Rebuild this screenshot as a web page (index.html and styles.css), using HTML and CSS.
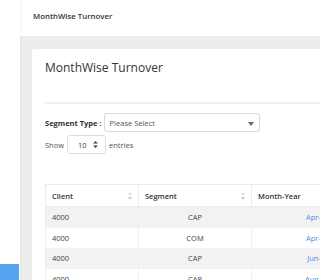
FILE: index.html
```html
<!DOCTYPE html>
<html lang="en">
<head>
    <meta charset="UTF-8">
    <meta name="viewport" content="width=device-width, initial-scale=1.0">
    <title>MonthWise Turnover</title>
    <link rel="stylesheet" href="styles.css">
</head>
<body>
    <div class="layout">
        <aside class="sidebar">
            <div class="sidebar-active"></div>
        </aside>

        <div class="main">
            <header class="topbar">MonthWise Turnover</header>

            <div class="content">
                <div class="card">
                    <h2 class="card-title">MonthWise Turnover</h2>
                    <hr class="divider">

                    <div class="filter-row">
                        <label class="filter-label">Segment Type :</label>
                        <div class="select">
                            <span>Please Select</span>
                            <span class="caret"></span>
                        </div>
                    </div>

                    <div class="length-row">
                        <span>Show</span>
                        <div class="number-box">
                            <span>10</span>
                            <svg class="spin" width="5" height="7" viewBox="0 0 5 7">
                                <path d="M2.5 0 L5 2.5 L0 2.5 Z M0 4.5 L5 4.5 L2.5 7 Z" fill="#444"/>
                            </svg>
                        </div>
                        <span>entries</span>
                    </div>

                    <table class="data-table">
                        <thead>
                            <tr>
                                <th class="col-client">Client <span class="sort"></span></th>
                                <th class="col-seg">Segment <span class="sort"></span></th>
                                <th class="col-month">Month-Year</th>
                            </tr>
                        </thead>
                        <tbody>
                            <tr><td>4000</td><td class="center">CAP</td><td class="month">Apr-2021</td></tr>
                            <tr><td>4000</td><td class="center">COM</td><td class="month">Apr-2021</td></tr>
                            <tr><td>4000</td><td class="center">CAP</td><td class="month">Jun-2021</td></tr>
                            <tr><td>4000</td><td class="center">CAP</td><td class="month">Aug-2021</td></tr>
                        </tbody>
                    </table>
                </div>
            </div>
        </div>
    </div>
</body>
</html>
```

FILE: styles.css
```css
html, body {
    margin: 0;
    padding: 0;
    overflow: hidden;
}

body {
    font-family: 'Open Sans', 'Liberation Sans', sans-serif;
    color: #333;
    background: #ededed;
    width: 320px;
    height: 280px;
}

.layout {
    display: flex;
    height: 280px;
}

.sidebar {
    width: 20px;
    flex-shrink: 0;
    background: #fff;
    display: flex;
    flex-direction: column;
    justify-content: flex-end;
    box-shadow: 1px 0 2px rgba(0, 0, 0, 0.06);
    z-index: 1;
}

.sidebar-active {
    height: 16px;
    width: 19px;
    background: #56a3f0;
}

.main {
    flex: 1;
    min-width: 0;
    display: flex;
    flex-direction: column;
}

.topbar {
    height: 36px;
    background: #fff;
    padding-left: 13px;
    font-size: 7.8px;
    font-weight: 600;
    line-height: 32px;
    color: #333;
    flex-shrink: 0;
}

.content {
    padding: 13px 0 0 12px;
    flex: 1;
}

.card {
    background: #fff;
    border-radius: 3px 0 0 0;
    padding: 11px 0 0 13px;
    width: 320px;
    height: 260px;
}

.card-title {
    margin: 0;
    font-size: 12px;
    font-weight: 500;
    line-height: 16px;
    color: #333;
}

.divider {
    border: none;
    border-top: 2px solid #f0f0f0;
    margin: 26px 0 9px 0;
}

.filter-row {
    display: flex;
    align-items: center;
    gap: 2px;
    font-size: 7.5px;
}

.filter-label {
    font-weight: 700;
}

.select {
    width: 144px;
    height: 17px;
    border: 1px solid #d9d9d9;
    border-radius: 3px;
    display: flex;
    align-items: center;
    justify-content: space-between;
    padding: 0 5px 0 5px;
    box-sizing: content-box;
    color: #555;
    font-size: 7.5px;
}

.caret {
    width: 0;
    height: 0;
    border-left: 3px solid transparent;
    border-right: 3px solid transparent;
    border-top: 4px solid #666;
    margin-top: 2px;
}

.length-row {
    display: flex;
    align-items: center;
    gap: 3px;
    font-size: 7.5px;
    color: #555;
    margin-top: 3px;
}

.number-box {
    width: 39px;
    height: 19px;
    border: 1px solid #ddd;
    border-radius: 3px;
    display: flex;
    align-items: center;
    justify-content: space-between;
    padding: 0 7px 0 10px;
    box-sizing: border-box;
    color: #444;
}

.data-table {
    margin-top: 30px;
    border-collapse: collapse;
    font-size: 7.5px;
    table-layout: fixed;
    width: 300px;
}

.data-table th {
    text-align: left;
    font-weight: 600;
    height: 21px;
    padding: 0 6px;
    border: 1px solid #ebebeb;
    border-bottom: 1px solid #ececec;
    position: relative;
    color: #333;
}

.col-client { width: 80px; }
.col-seg { width: 100px; }

.sort {
    position: absolute;
    right: 6px;
    top: 7px;
    width: 4px;
    height: 8px;
}

.sort::before,
.sort::after {
    content: "";
    position: absolute;
    left: 0;
    border-left: 2px solid transparent;
    border-right: 2px solid transparent;
}

.sort::before {
    top: 0;
    border-bottom: 3px solid #ddd;
}

.sort::after {
    bottom: 0;
    border-top: 3px solid #c9c9c9;
}

.data-table td {
    height: 20.5px;
    padding: 0 6px;
    border-left: 1px solid #f0f0f0;
    border-right: 1px solid #f0f0f0;
    color: #444;
}

.data-table tbody tr:nth-child(odd) {
    background: #f2f2f2;
}

.data-table .center {
    text-align: center;
}

.data-table .month {
    text-align: right;
    color: #4a90e2;
}
```
